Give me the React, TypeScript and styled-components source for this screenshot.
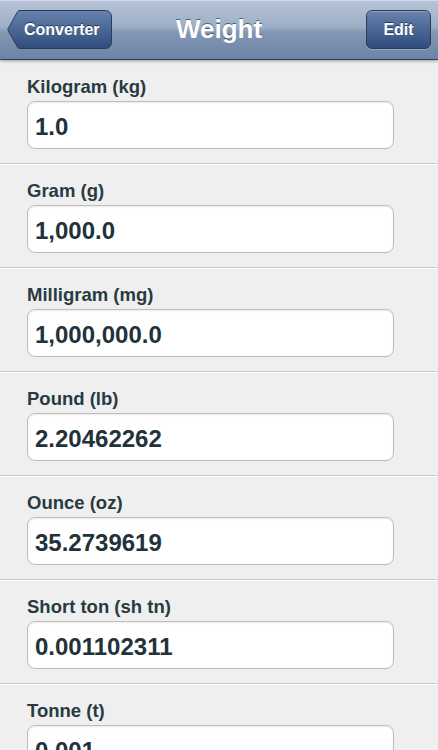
import React from 'react';
import styled, { createGlobalStyle } from 'styled-components';

const GlobalStyle = createGlobalStyle`
  html, body {
    margin: 0;
    padding: 0;
    background: #efefef;
    font-family: "Liberation Sans", Arial, Helvetica, sans-serif;
    overflow: hidden;
  }
`;

const Screen = styled.div`
  width: 438px;
  height: 750px;
  overflow: hidden;
  background: #efefef;
`;

const NavBar = styled.div`
  position: relative;
  z-index: 1;
  height: 59px;
  display: grid;
  grid-template-columns: 1fr auto 1fr;
  align-items: center;
  padding: 0 7px;
  background: linear-gradient(#b7c4d7 0%, #9dafc6 45%, #8397b4 55%, #6c83a3 100%);
  border-bottom: 1px solid #2e3f5b;
  box-shadow: inset 0 1px 0 #cfd8e5, 0 1px 3px rgba(0, 0, 0, 0.35);
`;

const Title = styled.h1`
  margin: 0;
  font-size: 26px;
  font-weight: bold;
  color: #fff;
  text-shadow: 0 -1px 0 rgba(20, 35, 60, 0.6);
`;

const BackButton = styled.button`
  position: relative;
  justify-self: start;
  width: 105px;
  height: 39px;
  padding: 0 12px 0 17px;
  border: none;
  background: none;
  display: flex;
  align-items: center;
  font-family: inherit;
  font-size: 16px;
  font-weight: bold;
  color: #fff;
  text-shadow: 0 -1px 0 rgba(10, 20, 40, 0.6);
  cursor: pointer;

  svg {
    position: absolute;
    left: 0;
    top: 0;
  }

  span {
    position: relative;
  }
`;

const EditButton = styled.button`
  justify-self: end;
  width: 65px;
  height: 39px;
  border: 1px solid #2b3c5a;
  border-radius: 6px;
  background: linear-gradient(#6783ad 0%, #4a6794 50%, #2f4c7c 100%);
  box-shadow: inset 0 1px 0 rgba(255, 255, 255, 0.25), 0 1px 0 rgba(255, 255, 255, 0.25);
  font-family: inherit;
  font-size: 16px;
  font-weight: bold;
  color: #fff;
  text-shadow: 0 -1px 0 rgba(10, 20, 40, 0.6);
  cursor: pointer;
`;

const Row = styled.div<{ first?: boolean }>`
  padding: ${({ first }) => (first ? '16px' : '15px')} 0 14px 27px;
  border-top: ${({ first }) => (first ? 'none' : '1px solid #ffffff')};
  border-bottom: 1px solid #cbcbcb;
  display: flex;
  flex-direction: column;
  gap: 3px;
`;

const Label = styled.label`
  font-size: 18.5px;
  line-height: 22px;
  font-weight: bold;
  color: #283a42;
`;

const Field = styled.input`
  box-sizing: border-box;
  width: 367px;
  height: 48px;
  margin: 0;
  padding: 3px 8px 0 7px;
  border: 1px solid #bdbdbd;
  border-radius: 8px;
  background: #fff;
  box-shadow: inset 0 1px 2px rgba(0, 0, 0, 0.08);
  font-family: inherit;
  font-size: 24px;
  font-weight: bold;
  color: #22323a;
  outline: none;
`;

const units = [
  { label: 'Kilogram (kg)', value: '1.0' },
  { label: 'Gram (g)', value: '1,000.0' },
  { label: 'Milligram (mg)', value: '1,000,000.0' },
  { label: 'Pound (lb)', value: '2.20462262' },
  { label: 'Ounce (oz)', value: '35.2739619' },
  { label: 'Short ton (sh tn)', value: '0.001102311' },
  { label: 'Tonne (t)', value: '0.001' },
];

const BackShape = () => (
  <svg width="105" height="39" viewBox="0 0 105 39">
    <defs>
      <linearGradient id="backFill" x1="0" y1="0" x2="0" y2="1">
        <stop offset="0" stopColor="#6783ad" />
        <stop offset="0.5" stopColor="#4a6794" />
        <stop offset="1" stopColor="#2f4c7c" />
      </linearGradient>
    </defs>
    <path
      d="M13 0.5 H98.5 A6 6 0 0 1 104.5 6.5 V32.5 A6 6 0 0 1 98.5 38.5 H13 Q11.5 38.5 10.6 37.3 L1.2 20.6 Q0.6 19.5 1.2 18.4 L10.6 1.7 Q11.5 0.5 13 0.5 Z"
      fill="url(#backFill)"
      stroke="#2b3c5a"
      strokeWidth="1"
    />
  </svg>
);

const App: React.FC = () => {
  return (
    <Screen>
      <GlobalStyle />
      <NavBar>
        <BackButton>
          <BackShape />
          <span>Converter</span>
        </BackButton>
        <Title>Weight</Title>
        <EditButton>Edit</EditButton>
      </NavBar>
      {units.map((u, i) => (
        <Row key={u.label} first={i === 0}>
          <Label>{u.label}</Label>
          <Field readOnly defaultValue={u.value} />
        </Row>
      ))}
    </Screen>
  );
};

export default App;
